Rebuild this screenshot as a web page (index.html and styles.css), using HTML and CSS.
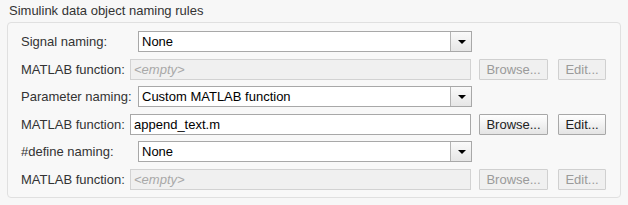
FILE: index.html
```html
<!DOCTYPE html>
<html lang="en">
<head>
  <meta charset="UTF-8" />
  <title>Naming rules</title>
  <link rel="stylesheet" href="styles.css">
</head>
<body>
  <div class="group">
    <div class="group-title">Simulink data object naming rules</div>
    <div class="panel">
      <div class="row">
        <span class="label combo-label">Signal naming:</span>
        <div class="combo"><span class="combo-text">None</span><span class="combo-arrow"></span></div>
      </div>
      <div class="row">
        <span class="label fn-label">MATLAB function:</span>
        <div class="field disabled"><i>&lt;empty&gt;</i></div>
        <button class="btn browse" disabled>Browse...</button>
        <button class="btn edit" disabled>Edit...</button>
      </div>
      <div class="row">
        <span class="label combo-label">Parameter naming:</span>
        <div class="combo"><span class="combo-text">Custom MATLAB function</span><span class="combo-arrow"></span></div>
      </div>
      <div class="row">
        <span class="label fn-label">MATLAB function:</span>
        <div class="field">append_text.m</div>
        <button class="btn browse">Browse...</button>
        <button class="btn edit">Edit...</button>
      </div>
      <div class="row">
        <span class="label combo-label">#define naming:</span>
        <div class="combo"><span class="combo-text">None</span><span class="combo-arrow"></span></div>
      </div>
      <div class="row">
        <span class="label fn-label">MATLAB function:</span>
        <div class="field disabled"><i>&lt;empty&gt;</i></div>
        <button class="btn browse" disabled>Browse...</button>
        <button class="btn edit" disabled>Edit...</button>
      </div>
    </div>
  </div>
</body>
</html>
```

FILE: styles.css
```css
body {
  margin: 0;
  background: #f7f7f7;
  font-family: "Liberation Sans", Arial, sans-serif;
  font-size: 13px;
  color: #333;
}
.group {
  width: 628px;
  height: 205px;
  padding-top: 3px;
  box-sizing: border-box;
}
.group-title {
  margin-left: 9px;
  line-height: 16px;
  color: #333;
}
.panel {
  margin: 3px 7px 0 7px;
  height: 176px;
  box-sizing: border-box;
  border: 1px solid #e0e0e0;
  border-radius: 4px;
  background: #f8f8f8;
  padding: 8px 0 0 13px;
  display: flex;
  flex-direction: column;
  gap: 6.5px;
}
.row {
  display: flex;
  align-items: center;
  height: 21px;
}
.label {
  white-space: nowrap;
}
.combo-label {
  width: 117px;
}
.fn-label {
  width: 109px;
}
.combo {
  width: 334px;
  height: 21px;
  box-sizing: border-box;
  border: 1px solid #a8a8a8;
  background: #fff;
  display: flex;
  color: #000;
}
.combo-text {
  flex: 1;
  padding-left: 3px;
  line-height: 19px;
}
.combo-arrow {
  width: 20px;
  border-left: 1px solid #b4b4b4;
  background: linear-gradient(#fafafa, #e6e6e6);
  position: relative;
}
.combo-arrow::after {
  content: "";
  position: absolute;
  left: 7px;
  top: 8px;
  border-left: 4px solid transparent;
  border-right: 4px solid transparent;
  border-top: 4px solid #000;
}
.field {
  width: 341px;
  height: 21px;
  box-sizing: border-box;
  border: 1px solid #a8a8a8;
  background: #fff;
  padding-left: 3px;
  line-height: 19px;
  color: #000;
}
.field.disabled {
  background: #f0f0f0;
  border-color: #d2d2d2;
  color: #a8a8a8;
}
.btn {
  height: 21px;
  box-sizing: border-box;
  font-family: inherit;
  font-size: 13px;
  color: #222;
  padding: 0;
  border: 1px solid #a8a8a8;
  border-radius: 1px;
  background: linear-gradient(#ffffff, #e4e4e4);
}
.btn:disabled {
  color: #9a9a9a;
  border-color: #d0d0d0;
  background: #f0f0f0;
}
.browse {
  width: 69px;
  margin-left: 8px;
}
.edit {
  width: 48px;
  margin-left: 10px;
}
```
